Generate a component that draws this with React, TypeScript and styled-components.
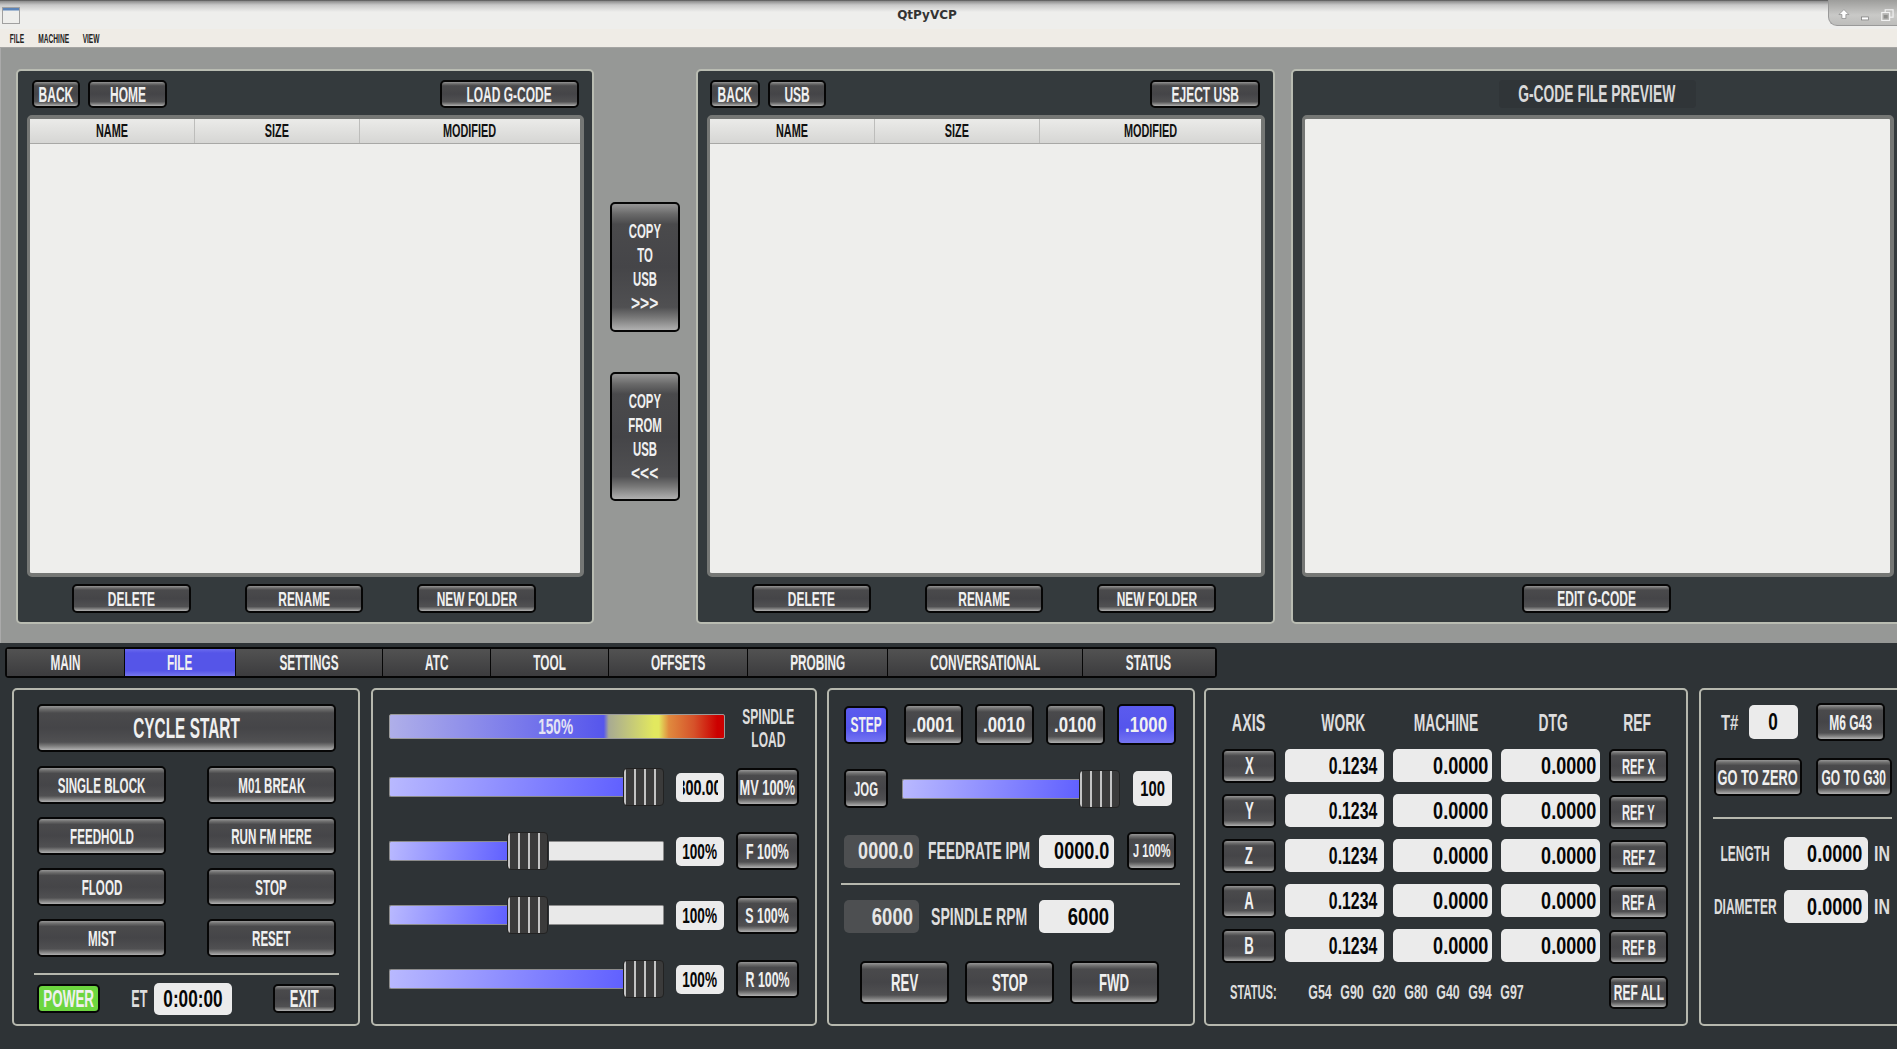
import React from "react";
import styled, { createGlobalStyle, css } from "styled-components";

const Global = createGlobalStyle`
  html, body { margin: 0; padding: 0; background: #2e3336; }
  * { box-sizing: border-box; }
`;

const Page = styled.div`
  width: 1897px;
  height: 1049px;
  overflow: hidden;
  display: flex;
  flex-direction: column;
  font-family: "Liberation Sans", Arial, sans-serif;
  font-weight: 700;
  background: #2e3336;
`;

const T = styled.span<{ $sx?: number; $o?: string }>`
  display: inline-block;
  flex: none;
  white-space: nowrap;
  transform: translateY(0.4px) scale(${(p) => p.$sx ?? 0.6}, 1.1);
  transform-origin: ${(p) => p.$o ?? "center"};
`;

/* ---------- window chrome ---------- */
const TitleBar = styled.div`
  height: 29px;
  flex: none;
  display: grid;
  grid-template-columns: 1828px 69px;
  background: linear-gradient(#3f3f3f 0, #8a8a8a 1px, #c8c8c8 5px, #eeeeec 12px, #eeeeec 100%);
`;
const TitleLeft = styled.div`
  display: flex;
  align-items: flex-start;
  padding: 7px 0 0 2px;
`;
const TitleText = styled.div`
  margin: 1px 0 0 874px;
  width: 66px;
  text-align: center;
  font: 700 12px "DejaVu Sans", sans-serif;
  color: #333;
`;
const WinBtns = styled.div`
  height: 26px;
  border-radius: 0 0 0 9px;
  background: linear-gradient(#9d9d9b, #c9c9c7 60%, #bdbdbb);
  border-left: 1px solid #999;
  border-bottom: 1px solid #999;
  display: flex;
  align-items: flex-start;
  padding: 9px 0 0 9px;
`;
const MenuBar = styled.div`
  height: 19px;
  flex: none;
  display: flex;
  align-items: center;
  gap: 14px;
  padding: 0 0 0 10px;
  background: #efece6;
  border-bottom: 1px solid #a5a5a3;
  color: #222;
  font-size: 11px;
`;
const MenuItem = styled.div<{ $w: number }>`
  width: ${(p) => p.$w}px;
  display: flex;
  justify-content: center;
`;

/* ---------- top area ---------- */
const TopArea = styled.div`
  height: 595px;
  flex: none;
  display: flex;
  padding: 21px 0 0 15px;
  background: #969896;
  border-left: 1px solid #aaa;
`;
const FilePanel = styled.section<{ $w: number }>`
  width: ${(p) => p.$w}px;
  height: 555px;
  flex: none;
  display: flex;
  flex-direction: column;
  padding: 9px 8px 0 9px;
  background: #343a3d;
  border: 2px solid #b9bcb2;
  border-radius: 5px;
`;
const Toolbar = styled.div<{ $l?: number }>`
  height: 28px;
  flex: none;
  display: flex;
  align-items: center;
  gap: 8px;
  padding: 0 5px 0 ${(p) => p.$l ?? 5}px;
`;
const Spacer = styled.div`
  flex: 1;
`;
const Frame = styled.div`
  height: 462px;
  flex: none;
  margin-top: 7px;
  display: flex;
  flex-direction: column;
  background: #eeeeec;
  border: 4px solid #757775;
  border-left-width: 3px;
  border-radius: 5px;
`;
const TableHead = styled.div`
  height: 25px;
  flex: none;
  display: grid;
  grid-template-columns: 165px 165px 1fr;
  background: linear-gradient(#ebebe9, #d6d6d4);
  border-bottom: 1px solid #a8a8a6;
  color: #111;
  font-size: 17px;
`;
const HeadCell = styled.div`
  display: flex;
  align-items: center;
  justify-content: center;
  border-right: 1px solid #bdbdbb;
  &:last-child {
    border-right: 0;
  }
`;
const FooterRow = styled.div`
  height: 29px;
  flex: none;
  margin-top: 7px;
  display: flex;
  gap: 54px;
  padding-left: 45px;
`;
const MiddleColumn = styled.div`
  width: 102px;
  flex: none;
  display: flex;
  flex-direction: column;
  align-items: center;
  gap: 40px;
  padding-top: 133px;
`;
const CopyLines = styled.div`
  display: flex;
  flex-direction: column;
  align-items: center;
  line-height: 24px;
  font-size: 19px;
`;
const PreviewPanel = styled(FilePanel)`
  margin-left: 16px;
`;
const PreviewTitleRow = styled.div`
  height: 28px;
  flex: none;
  display: flex;
  justify-content: center;
  padding-right: 9px;
`;
const PreviewTitle = styled.div`
  width: 197px;
  height: 28px;
  display: flex;
  align-items: center;
  justify-content: center;
  background: #303538;
  border-radius: 4px;
  color: #dadada;
  font-size: 22px;
`;
const PreviewFrame = styled(Frame)`
  width: 592px;
`;
const PreviewFooter = styled.div`
  height: 29px;
  margin-top: 7px;
  display: flex;
  padding-left: 220px;
`;

/* ---------- buttons ---------- */
const steel = css`
  background: linear-gradient(#959595 0, #6a6a6a 8%, #4a4a4c 16%, #454548 50%, #505052 82%, #787878 90%, #b0b0b0 100%);
`;
const Btn = styled.button<{ $w?: number; $h?: number; $fs?: number; $kind?: "blue" | "green" }>`
  width: ${(p) => (p.$w ? `${p.$w}px` : "auto")};
  height: ${(p) => (p.$h ? `${p.$h}px` : "100%")};
  flex: none;
  display: flex;
  align-items: center;
  justify-content: center;
  padding: 0;
  overflow: visible;
  border: 2px solid #060606;
  border-radius: 5px;
  color: #f0f0f0;
  font-family: inherit;
  font-weight: 700;
  font-size: ${(p) => p.$fs ?? 20}px;
  ${steel}
  ${(p) =>
    p.$kind === "blue" &&
    css`
      background: linear-gradient(#5b5bee 0, #5555ec 60%, #7575f2 100%);
    `}
  ${(p) =>
    p.$kind === "green" &&
    css`
      background: #6dd63f;
    `}
`;

/* ---------- tabs ---------- */
const Lower = styled.div`
  flex: 1;
  padding: 4px 0 0 5px;
  background: #2e3336;
`;
const Tabs = styled.nav`
  width: 1212px;
  height: 31px;
  display: flex;
  border: 2px solid #060606;
  border-radius: 4px;
  background: #060606;
  gap: 1px;
  color: #f0f0f0;
  font-size: 20px;
`;
const Tab = styled.div<{ $w: number; $on?: boolean }>`
  width: ${(p) => p.$w}px;
  display: flex;
  align-items: center;
  justify-content: center;
  background: ${(p) =>
    p.$on ? "linear-gradient(#6a6aee 0, #5555e8 15%, #5555e8 80%, #7777ef 100%)" : "linear-gradient(#525252, #3c3c3e)"};
`;
const PanelRow = styled.div`
  display: flex;
  margin: 10px 0 0 7px;
`;
const Box = styled.section<{ $w: number; $gap?: number; $pt: number; $pl: number }>`
  width: ${(p) => p.$w}px;
  height: 338px;
  flex: none;
  display: flex;
  flex-direction: column;
  margin-right: ${(p) => p.$gap ?? 10}px;
  padding: ${(p) => p.$pt}px 0 0 ${(p) => p.$pl}px;
  border: 2px solid #b6b8ae;
  border-radius: 5px;
`;
const Row = styled.div<{ $h: number; $mt?: number; $ml?: number; $gap?: number; $w?: number }>`
  width: ${(p) => (p.$w ? `${p.$w}px` : "auto")};
  height: ${(p) => p.$h}px;
  flex: none;
  margin-top: ${(p) => p.$mt ?? 0}px;
  margin-left: ${(p) => p.$ml ?? 0}px;
  display: flex;
  align-items: center;
  gap: ${(p) => p.$gap ?? 0}px;
`;
const Rule = styled.div<{ $w: number; $mt: number; $ml: number }>`
  width: ${(p) => p.$w}px;
  height: 2px;
  flex: none;
  margin-top: ${(p) => p.$mt}px;
  margin-left: ${(p) => p.$ml}px;
  background: #b6b8ae;
`;
const Pair = styled.div`
  display: grid;
  grid-template-columns: 129px 129px;
  grid-auto-rows: 38px;
  column-gap: 41px;
  row-gap: 13px;
  margin-top: 14px;
`;
const Caption = styled.div<{ $w?: number; $fs?: number; $ml?: number; $c?: string }>`
  width: ${(p) => (p.$w ? `${p.$w}px` : "auto")};
  flex: none;
  margin-left: ${(p) => p.$ml ?? 0}px;
  display: flex;
  justify-content: center;
  color: ${(p) => p.$c ?? "#dedede"};
  font-size: ${(p) => p.$fs ?? 20}px;
`;

/* ---------- fields ---------- */
const Field = styled.div<{ $w: number; $h: number; $fs?: number; $dark?: boolean; $center?: boolean; $pr?: number; $ml?: number }>`
  width: ${(p) => p.$w}px;
  height: ${(p) => p.$h}px;
  flex: none;
  margin-left: ${(p) => p.$ml ?? 0}px;
  display: flex;
  align-items: center;
  justify-content: ${(p) => (p.$center ? "center" : "flex-end")};
  padding-right: ${(p) => (p.$center ? 0 : p.$pr ?? 6)}px;
  overflow: hidden;
  border-radius: 5px;
  font-size: ${(p) => p.$fs ?? 22}px;
  background: ${(p) => (p.$dark ? "#4d4f51" : "#ebebeb")};
  color: ${(p) => (p.$dark ? "#e6e6e6" : "#060606")};
`;
const ClipText = styled.div`
  width: 35px;
  overflow: hidden;
  display: flex;
  justify-content: center;
`;

/* ---------- sliders / load ---------- */
const Load = styled.div`
  width: 336px;
  height: 25px;
  flex: none;
  align-self: flex-start;
  display: flex;
  align-items: center;
  padding-left: 140px;
  border: 1px solid #9a9a9a;
  border-radius: 2px;
  color: #e4e4f4;
  font-size: 20px;
  background: linear-gradient(
    90deg,
    #afafe9 0,
    #5656ec 64%,
    #a8aa92 65.5%,
    #e2e85f 79%,
    #e2e85f 80.5%,
    #e08a3e 83.5%,
    #d6522a 91%,
    #cc0000 98%
  );
`;
const SpindleLoad = styled.div`
  width: 64px;
  margin-left: 11px;
  flex: none;
  display: flex;
  flex-direction: column;
  align-items: center;
  line-height: 23px;
  color: #dedede;
  font-size: 20px;
`;
const Slider = styled.div<{ $w: number }>`
  width: ${(p) => p.$w}px;
  height: 100%;
  flex: none;
  display: flex;
  align-items: center;
`;
const Fill = styled.div<{ $w: number }>`
  width: ${(p) => p.$w}px;
  height: 20px;
  flex: none;
  border: 1px solid #8c8c8c;
  border-right: 0;
  border-radius: 2px 0 0 2px;
  background: linear-gradient(100deg, #b9b9ff 0, #6060ff 100%);
`;
const Rest = styled.div`
  flex: 1;
  height: 20px;
  margin-left: 1px;
  border: 1px solid #8c8c8c;
  border-left: 0;
  border-radius: 0 2px 2px 0;
  background: #e9e9e9;
`;
const Handle = styled.div`
  width: 41px;
  height: 38px;
  flex: none;
  border: 1px solid #222;
  border-radius: 4px;
  background: repeating-linear-gradient(90deg, #c4c4c4 0, #c4c4c4 2px, #3b3b3b 2px, #3b3b3b 10px);
`;

/* ---------- dro ---------- */
const Dro = styled.div`
  display: grid;
  grid-template-columns: 54px 99px 99px 99px 59px;
  grid-template-rows: 31px repeat(5, 34px);
  column-gap: 9px;
  row-gap: 11px;
`;
const DroHead = styled.div<{ $pl?: number; $pr?: number }>`
  display: flex;
  align-items: center;
  justify-content: center;
  padding: 0 ${(p) => p.$pr ?? 0}px 0 ${(p) => p.$pl ?? 0}px;
  color: #dedede;
  font-size: 21px;
`;
const StatusRow = styled.div`
  width: 446px;
  height: 33px;
  flex: none;
  margin-top: 13px;
  display: flex;
  align-items: center;
  color: #dedede;
  font-size: 18px;
`;
const StatusLabel = styled.div`
  width: 87px;
  flex: none;
  padding-left: 8px;
  display: flex;
  justify-content: flex-start;
`;
const GList = styled.div`
  flex: 1;
  display: flex;
  gap: 9px;
`;
const GCode = styled.div`
  width: 23px;
  display: flex;
  justify-content: center;
`;
const RefBtn = styled(Btn)<{ $n?: boolean }>`
  margin-top: ${(p) => (p.$n ? 1 : 0)}px;
`;

/* ---------- small drawings ---------- */
const WinIcon = () => (
  <svg width="18" height="17" viewBox="0 0 18 17">
    <rect x="0.5" y="0.5" width="17" height="16" fill="#eeeeec" stroke="#a0a0a0" />
    <rect x="1" y="1" width="16" height="2.5" fill="#5c84b8" />
  </svg>
);
const WinGlyphs = () => (
  <svg width="60" height="14" viewBox="0 0 60 14" fill="none">
    <path d="M6 0.5 L11 5.5 L8 5.5 L8 9.5 L4 9.5 L4 5.5 L1 5.5 Z" fill="#fff" stroke="#777" strokeWidth="0.6" />
    <rect x="24" y="8" width="7" height="3" fill="#fff" stroke="#777" strokeWidth="0.7" />
    <rect x="48" y="0.7" width="8" height="7.5" stroke="#f2f2f2" strokeWidth="1.2" />
    <rect x="44.5" y="3.5" width="8" height="8" fill="#b5b5b3" stroke="#f2f2f2" strokeWidth="1.2" />
    <rect x="46.5" y="6" width="4" height="3.5" fill="#8e8e8c" />
  </svg>
);

/* ---------- data ---------- */
const TABS: [string, number, boolean?][] = [
  ["MAIN", 117],
  ["FILE", 110, true],
  ["SETTINGS", 146],
  ["ATC", 107],
  ["TOOL", 117],
  ["OFFSETS", 138],
  ["PROBING", 139],
  ["CONVERSATIONAL", 194],
  ["STATUS", 132],
];
const SIDE = ["SINGLE BLOCK", "M01 BREAK", "FEEDHOLD", "RUN FM HERE", "FLOOD", "STOP", "MIST", "RESET"];
const GS = ["G54", "G90", "G20", "G80", "G40", "G94", "G97"];
const AXES = ["X", "Y", "Z", "A", "B"];

const FileBrowser = ({ path, action, actionW, backW, pathW, left, width }: {
  path: string; action: string; actionW: number; backW: number; pathW: number; left: number; width: number;
}) => (
  <FilePanel $w={width}>
    <Toolbar $l={left}>
      <Btn $w={backW} $fs={20}><T>BACK</T></Btn>
      <Btn $w={pathW} $fs={20}><T>{path}</T></Btn>
      <Spacer />
      <Btn $w={actionW} $fs={20}><T>{action}</T></Btn>
    </Toolbar>
    <Frame>
      <TableHead>
        <HeadCell><T $sx={0.64}>NAME</T></HeadCell>
        <HeadCell><T $sx={0.64}>SIZE</T></HeadCell>
        <HeadCell><T $sx={0.64}>MODIFIED</T></HeadCell>
      </TableHead>
    </Frame>
    <FooterRow>
      <Btn $w={119} $fs={19}><T $sx={0.63}>DELETE</T></Btn>
      <Btn $w={118} $fs={19}><T $sx={0.63}>RENAME</T></Btn>
      <Btn $w={119} $fs={19}><T $sx={0.63}>NEW FOLDER</T></Btn>
    </FooterRow>
  </FilePanel>
);

const SliderRow = ({ fill, rest, value, btn, clip, sx }: {
  fill: number; rest?: boolean; value: string; btn: string; clip?: boolean; sx: number;
}) => (
  <Row $h={38} $gap={12}>
    <Slider $w={275}>
      <Fill $w={fill} />
      <Handle />
      {rest && <Rest />}
    </Slider>
    <Field $w={48} $h={29} $fs={20} $center>
      {clip ? <ClipText><T $sx={0.72}>{value}</T></ClipText> : <T $sx={0.68}>{value}</T>}
    </Field>
    <Btn $w={63} $fs={20}><T $sx={sx}>{btn}</T></Btn>
  </Row>
);

export default function App() {
  return (
    <Page>
      <Global />
      <TitleBar>
        <TitleLeft>
          <WinIcon />
          <TitleText>QtPyVCP</TitleText>
        </TitleLeft>
        <WinBtns><WinGlyphs /></WinBtns>
      </TitleBar>
      <MenuBar>
        <MenuItem $w={14}><T>FILE</T></MenuItem>
        <MenuItem $w={31}><T>MACHINE</T></MenuItem>
        <MenuItem $w={17}><T>VIEW</T></MenuItem>
      </MenuBar>

      <TopArea>
        <FileBrowser path="HOME" action="LOAD G-CODE" actionW={139} backW={48} pathW={79} left={5} width={578} />
        <MiddleColumn>
          <Btn $w={70} $h={130}>
            <CopyLines><T>COPY</T><T>TO</T><T>USB</T><T $sx={0.82}>{">>>"}</T></CopyLines>
          </Btn>
          <Btn $w={70} $h={129}>
            <CopyLines><T>COPY</T><T>FROM</T><T>USB</T><T $sx={0.82}>{"<<<"}</T></CopyLines>
          </Btn>
        </MiddleColumn>
        <FileBrowser path="USB" action="EJECT USB" actionW={110} backW={50} pathW={58} left={3} width={579} />
        <PreviewPanel $w={620}>
          <PreviewTitleRow>
            <PreviewTitle><T $sx={0.63}>G-CODE FILE PREVIEW</T></PreviewTitle>
          </PreviewTitleRow>
          <PreviewFrame />
          <PreviewFooter>
            <Btn $w={149} $fs={20}><T>EDIT G-CODE</T></Btn>
          </PreviewFooter>
        </PreviewPanel>
      </TopArea>

      <Lower>
        <Tabs>
          {TABS.map(([t, w, on]) => (
            <Tab key={t} $w={w} $on={on}><T $sx={0.59}>{t}</T></Tab>
          ))}
        </Tabs>
        <PanelRow>
          <Box $w={348} $gap={11} $pt={14} $pl={23}>
            <Btn $w={299} $h={48} $fs={27}><T $sx={0.57}>CYCLE START</T></Btn>
            <Pair>
              {SIDE.map((s) => (
                <Btn key={s} $fs={20}><T $sx={0.58}>{s}</T></Btn>
              ))}
            </Pair>
            <Rule $w={305} $mt={16} $ml={-3} />
            <Row $h={29} $mt={9} $w={299}>
              <Btn $w={63} $fs={21} $kind="green"><T $sx={0.64}>POWER</T></Btn>
              <Caption $w={17} $fs={21} $ml={31}><T>ET</T></Caption>
              <Field $w={78} $h={32} $ml={6} $center>
                <T $sx={0.78}>0:00:00</T>
              </Field>
              <Spacer />
              <Btn $w={63} $fs={21}><T $sx={0.62}>EXIT</T></Btn>
            </Row>
          </Box>

          <Box $w={446} $pt={24} $pl={16}>
            <Row $h={28} $gap={0}>
              <Load><T $sx={0.68}>150%</T></Load>
              <SpindleLoad><T>SPINDLE</T><T>LOAD</T></SpindleLoad>
            </Row>
            <Row $h={0} $mt={26} />
            <SliderRow fill={234} value="300.00" btn="MV 100%" clip sx={0.64} />
            <Row $h={0} $mt={26} />
            <SliderRow fill={118} rest value="100%" btn="F 100%" sx={0.62} />
            <Row $h={0} $mt={26} />
            <SliderRow fill={118} rest value="100%" btn="S 100%" sx={0.62} />
            <Row $h={0} $mt={26} />
            <SliderRow fill={234} value="100%" btn="R 100%" sx={0.62} />
          </Box>

          <Box $w={368} $gap={9} $pt={14} $pl={15}>
            <Row $h={41}>
              <Btn $w={44} $h={38} $fs={20} $kind="blue"><T>STEP</T></Btn>
              <Row $h={41} $ml={16} $gap={12}>
                <Btn $w={59} $fs={20}><T $sx={0.84}>.0001</T></Btn>
                <Btn $w={59} $fs={20}><T $sx={0.84}>.0010</T></Btn>
                <Btn $w={59} $fs={20}><T $sx={0.84}>.0100</T></Btn>
                <Btn $w={59} $fs={20} $kind="blue"><T $sx={0.84}>.1000</T></Btn>
              </Row>
            </Row>
            <Row $h={39} $mt={24}>
              <Btn $w={44} $fs={19}><T>JOG</T></Btn>
              <Row $h={39} $ml={14} $gap={13}>
                <Slider $w={218}>
                  <Fill $w={177} />
                  <Handle />
                </Slider>
                <Field $w={39} $h={35} $fs={20} $center><T $sx={0.74}>100</T></Field>
              </Row>
            </Row>
            <Row $h={38} $mt={24}>
              <Field $w={75} $h={33} $dark><T $sx={0.82} $o="right">0000.0</T></Field>
              <Caption $w={100} $fs={22} $ml={10}><T $sx={0.63}>FEEDRATE IPM</T></Caption>
              <Row $h={38} $ml={10} $gap={13}>
                <Field $w={75} $h={33} $pr={5}><T $sx={0.82} $o="right">0000.0</T></Field>
                <Btn $w={49} $fs={17}><T $sx={0.65}>J 100%</T></Btn>
              </Row>
            </Row>
            <Rule $w={339} $mt={13} $ml={-3} />
            <Row $h={33} $mt={15}>
              <Field $w={75} $h={33} $dark><T $sx={0.84} $o="right">6000</T></Field>
              <Caption $w={100} $fs={22} $ml={10}><T $sx={0.64}>SPINDLE RPM</T></Caption>
              <Row $h={33} $ml={10}>
                <Field $w={75} $h={33} $pr={5}><T $sx={0.84} $o="right">6000</T></Field>
              </Row>
            </Row>
            <Row $h={43} $mt={28} $ml={16} $gap={16}>
              <Btn $w={89} $fs={22}><T>REV</T></Btn>
              <Btn $w={89} $fs={22}><T>STOP</T></Btn>
              <Btn $w={89} $fs={22}><T>FWD</T></Btn>
            </Row>
          </Box>

          <Box $w={484} $gap={11} $pt={17} $pl={16}>
            <Dro>
              <DroHead><T $sx={0.68}>AXIS</T></DroHead>
              <DroHead $pl={17}><T $sx={0.66}>WORK</T></DroHead>
              <DroHead $pl={6}><T $sx={0.66}>MACHINE</T></DroHead>
              <DroHead $pl={5}><T $sx={0.66}>DTG</T></DroHead>
              <DroHead $pr={3}><T $sx={0.66}>REF</T></DroHead>
              {AXES.map((a, i) => (
                <React.Fragment key={a}>
                  <Btn $fs={22}><T>{a}</T></Btn>
                  <Field $w={99} $h={33} $pr={7}><T $sx={0.72} $o="right">0.1234</T></Field>
                  <Field $w={99} $h={33} $pr={4}><T $sx={0.82} $o="right">0.0000</T></Field>
                  <Field $w={99} $h={33} $pr={4}><T $sx={0.82} $o="right">0.0000</T></Field>
                  <RefBtn $n={i > 0} $fs={20}><T $sx={0.56}>{`REF ${a}`}</T></RefBtn>
                </React.Fragment>
              ))}
            </Dro>
            <StatusRow>
              <StatusLabel><T $sx={0.62} $o="left">STATUS:</T></StatusLabel>
              <GList>
                {GS.map((g) => (
                  <GCode key={g}><T $sx={0.69}>{g}</T></GCode>
                ))}
              </GList>
              <Btn $w={59} $fs={20}><T>REF ALL</T></Btn>
            </StatusRow>
          </Box>

          <Box $w={240} $pt={13} $pl={0}>
            <Row $h={38} $ml={19}>
              <Caption $w={20} $fs={20}><T $sx={0.75}>T#</T></Caption>
              <Row $h={38} $ml={9} $gap={18}>
                <Field $w={49} $h={34} $center><T $sx={0.78}>0</T></Field>
                <Btn $w={69} $fs={20}><T>M6 G43</T></Btn>
              </Row>
            </Row>
            <Row $h={38} $mt={17} $ml={13} $gap={14}>
              <Btn $w={88} $fs={20}><T $sx={0.64}>GO TO ZERO</T></Btn>
              <Btn $w={76} $fs={20}><T>GO TO G30</T></Btn>
            </Row>
            <Rule $w={179} $mt={21} $ml={12} />
            <Row $h={33} $mt={18} $ml={11} $gap={6}>
              <Caption $w={66} $fs={20}><T>LENGTH</T></Caption>
              <Field $w={84} $h={33}><T $sx={0.82} $o="right">0.0000</T></Field>
              <Caption $w={15} $fs={20}><T $sx={0.8}>IN</T></Caption>
            </Row>
            <Row $h={33} $mt={20} $ml={11} $gap={6}>
              <Caption $w={66} $fs={20}><T>DIAMETER</T></Caption>
              <Field $w={84} $h={33}><T $sx={0.82} $o="right">0.0000</T></Field>
              <Caption $w={15} $fs={20}><T $sx={0.8}>IN</T></Caption>
            </Row>
          </Box>
        </PanelRow>
      </Lower>
    </Page>
  );
}
